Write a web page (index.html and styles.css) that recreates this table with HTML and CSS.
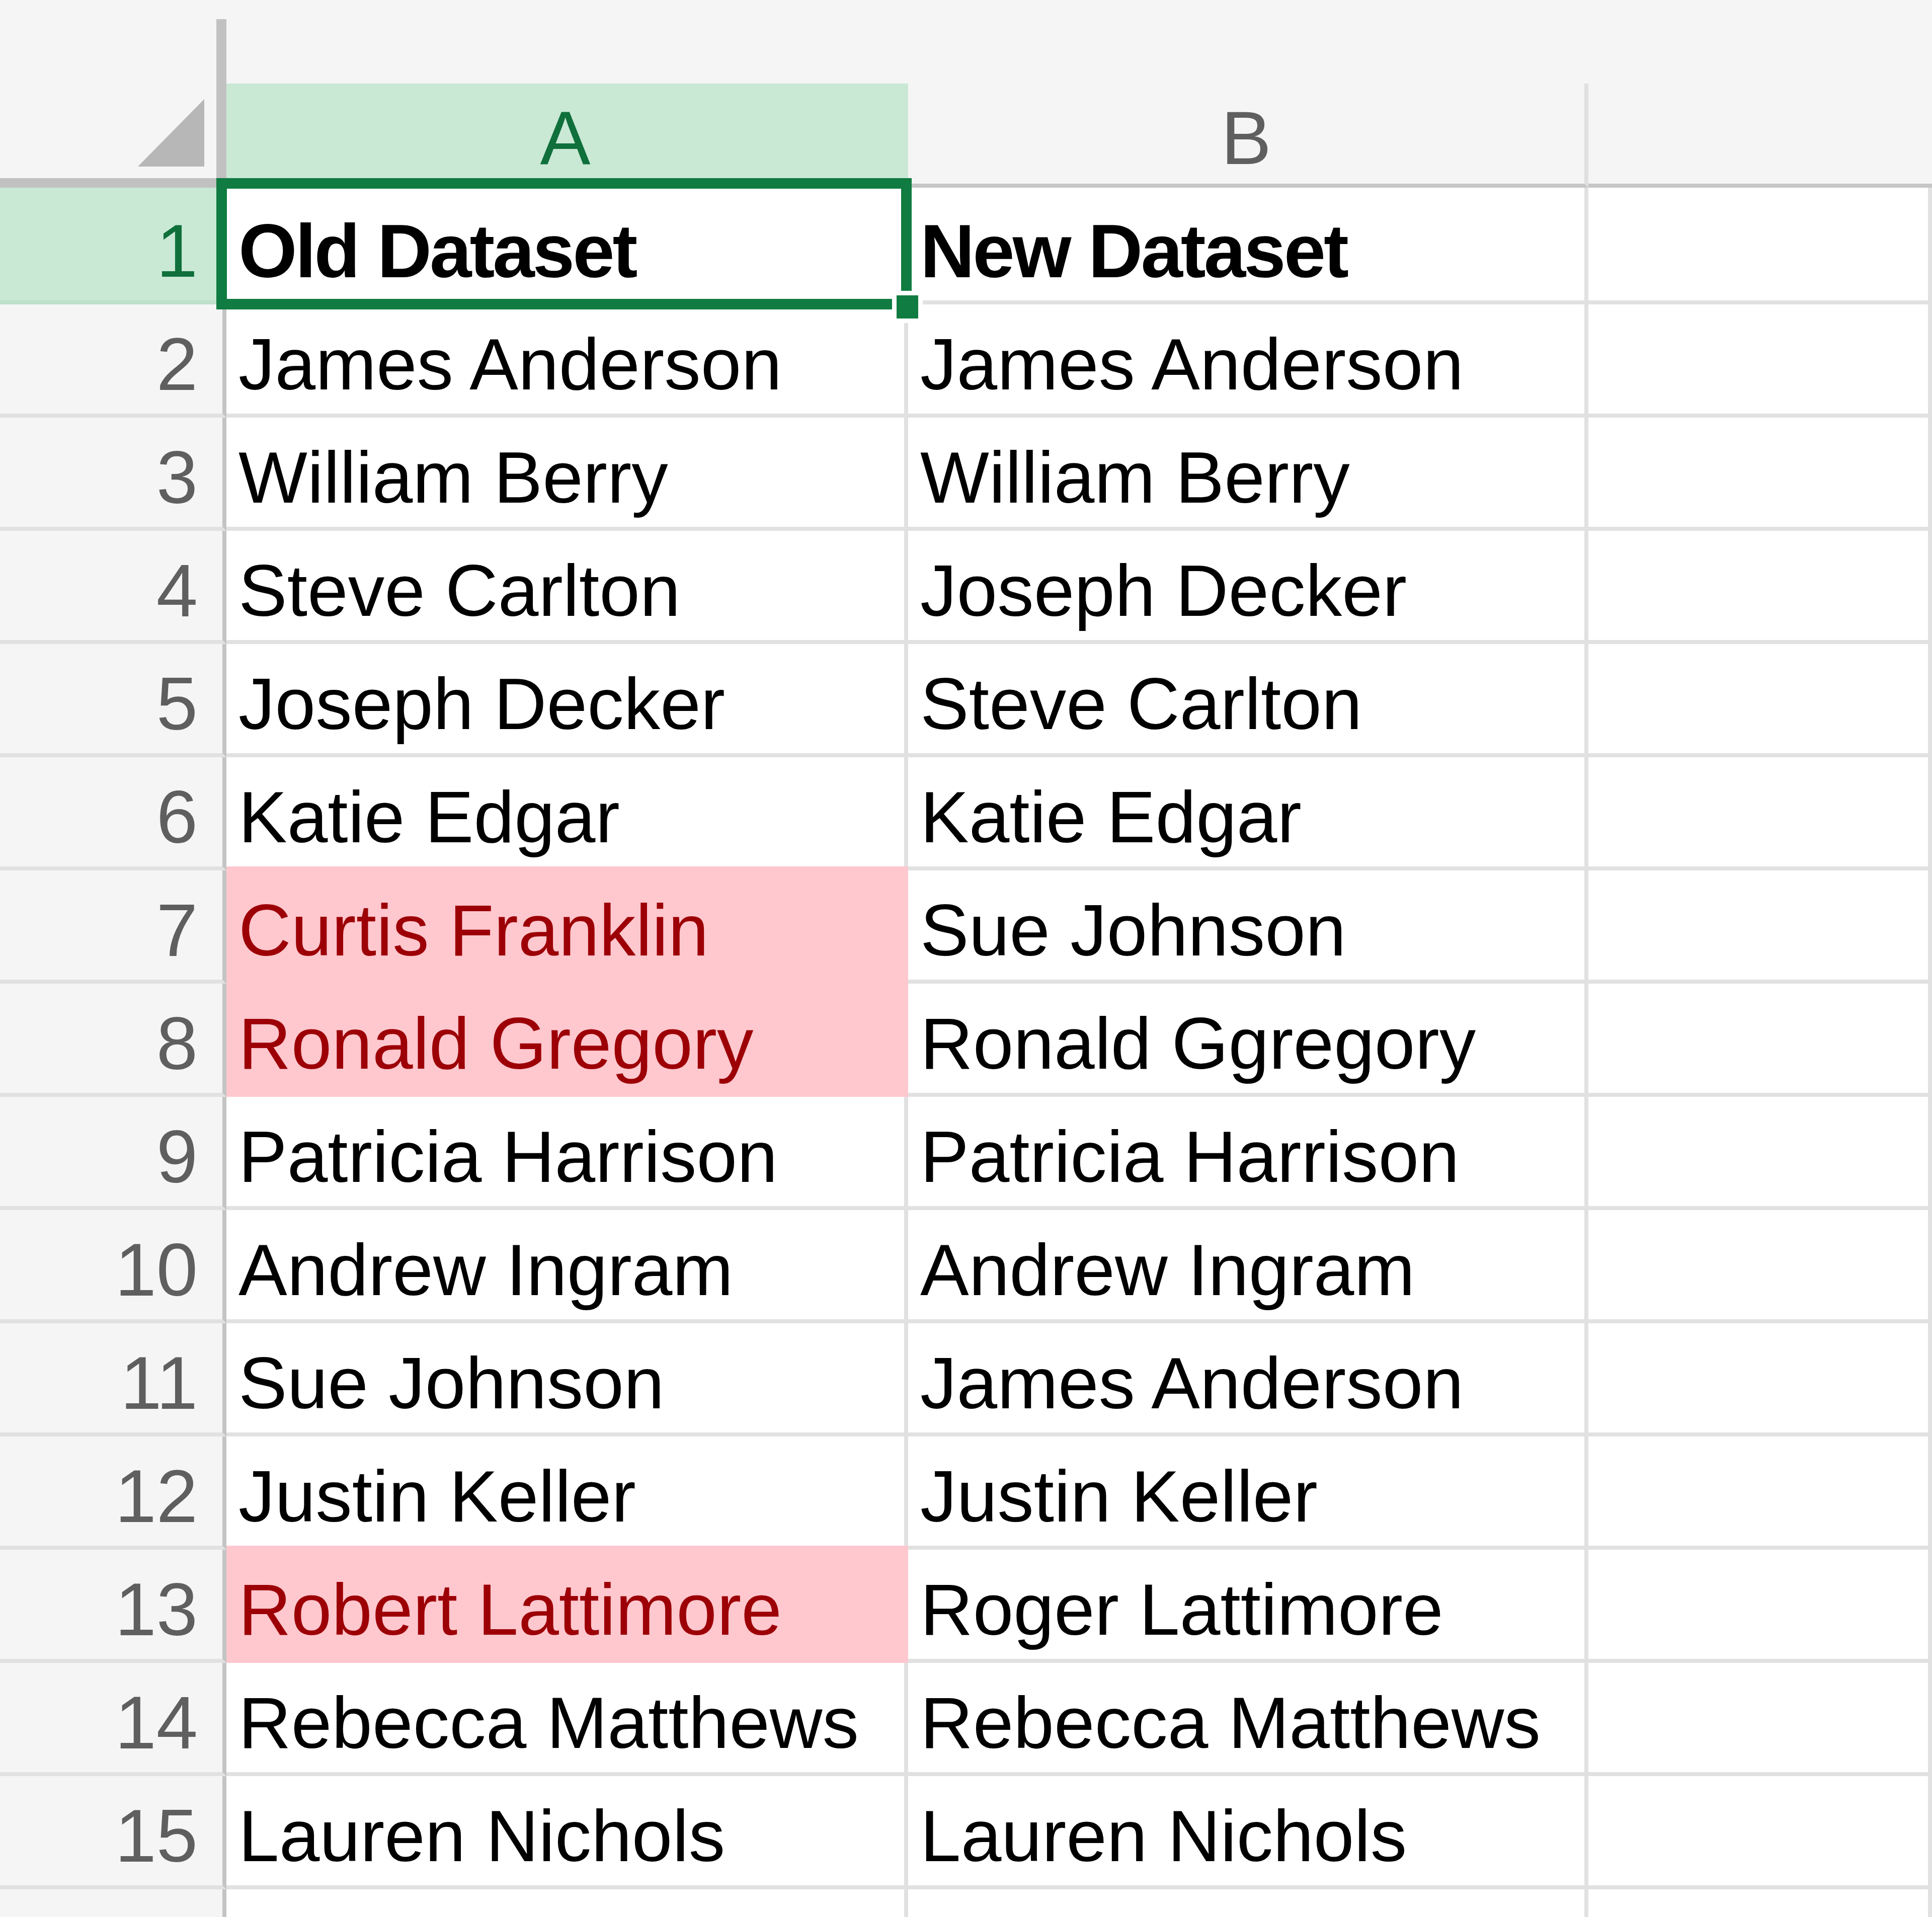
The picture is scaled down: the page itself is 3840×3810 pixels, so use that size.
FILE: index.html
```html
<!DOCTYPE html>
<html lang="en">
<head>
<meta charset="utf-8">
<title>Old vs New Dataset</title>
<link rel="stylesheet" href="styles.css">
</head>
<body>
<div class="sheet">
  <div class="corner"><svg class="tri" width="132" height="134" viewBox="0 0 132 134"><polygon points="132,0 132,134 0,134" fill="#b7b7b7"/></svg></div>
  <div class="colhead active">A</div>
  <div class="colhead">B</div>
  <div class="colhead last"></div>

  <div class="rh active">1</div>
  <div class="cell hd">Old Dataset</div>
  <div class="cell hd">New Dataset</div>
  <div class="cell"></div>

  <div class="rh">2</div>
  <div class="cell">James Anderson</div>
  <div class="cell">James Anderson</div>
  <div class="cell"></div>

  <div class="rh">3</div>
  <div class="cell">William Berry</div>
  <div class="cell">William Berry</div>
  <div class="cell"></div>

  <div class="rh">4</div>
  <div class="cell">Steve Carlton</div>
  <div class="cell">Joseph Decker</div>
  <div class="cell"></div>

  <div class="rh">5</div>
  <div class="cell">Joseph Decker</div>
  <div class="cell">Steve Carlton</div>
  <div class="cell"></div>

  <div class="rh">6</div>
  <div class="cell">Katie Edgar</div>
  <div class="cell">Katie Edgar</div>
  <div class="cell"></div>

  <div class="rh">7</div>
  <div class="cell bad">Curtis Franklin</div>
  <div class="cell">Sue Johnson</div>
  <div class="cell"></div>

  <div class="rh">8</div>
  <div class="cell bad">Ronald Gregory</div>
  <div class="cell">Ronald Ggregory</div>
  <div class="cell"></div>

  <div class="rh">9</div>
  <div class="cell">Patricia Harrison</div>
  <div class="cell">Patricia Harrison</div>
  <div class="cell"></div>

  <div class="rh">10</div>
  <div class="cell">Andrew Ingram</div>
  <div class="cell">Andrew Ingram</div>
  <div class="cell"></div>

  <div class="rh">11</div>
  <div class="cell">Sue Johnson</div>
  <div class="cell">James Anderson</div>
  <div class="cell"></div>

  <div class="rh">12</div>
  <div class="cell">Justin Keller</div>
  <div class="cell">Justin Keller</div>
  <div class="cell"></div>

  <div class="rh">13</div>
  <div class="cell bad">Robert Lattimore</div>
  <div class="cell">Roger Lattimore</div>
  <div class="cell"></div>

  <div class="rh">14</div>
  <div class="cell">Rebecca Matthews</div>
  <div class="cell">Rebecca Matthews</div>
  <div class="cell"></div>

  <div class="rh">15</div>
  <div class="cell">Lauren Nichols</div>
  <div class="cell">Lauren Nichols</div>
  <div class="cell"></div>

  <div class="rh"></div>
  <div class="cell"></div>
  <div class="cell"></div>
  <div class="cell"></div>

  <div class="sel"></div>
  <div class="handle"></div>
</div>
</body>
</html>
```

FILE: styles.css
```css
* { box-sizing: border-box; }

html, body {
  margin: 0;
  padding: 0;
}

body {
  width: 3840px;
  height: 3810px;
  overflow: hidden;
  background: #f5f5f5;
  font-family: "Liberation Sans", Arial, sans-serif;
}

.sheet {
  position: relative;
  display: grid;
  grid-template-columns: 450px 1355px 1352px 1fr;
  grid-template-rows: 373px 232px;
  grid-auto-rows: 225px;
}

.corner {
  margin-top: 38px;
  border-right: 20px solid #c1c1c1;
  border-bottom: 19px solid #c1c1c1;
  display: flex;
  justify-content: flex-end;
  align-items: flex-end;
  padding: 0 24px 23px 0;
}

.tri { display: block; }

.colhead {
  align-self: end;
  height: 207px;
  background: #f5f5f5;
  border-bottom: 8px solid #c6c6c6;
  border-right: 8px solid #e0e0e0;
  display: flex;
  justify-content: center;
  align-items: flex-end;
  padding-bottom: 16px;
  font-size: 150px;
  line-height: 1;
  color: #5f5f5f;
}

.colhead.active {
  background: #c9e9d5;
  color: #0f703b;
  border-right-color: #c9e9d5;
}

.colhead.last { border-right: none; }

.rh {
  background: #f5f5f5;
  border-right: 8px solid #c4c4c4;
  border-bottom: 8px solid #e1e1e1;
  display: flex;
  justify-content: flex-end;
  align-items: flex-end;
  padding: 0 49px 24px 0;
  font-size: 148px;
  line-height: 1;
  color: #5f5f5f;
}

.rh.active {
  background: #c9e9d5;
  color: #0f703b;
  border-bottom-color: #bfe0cb;
}

.cell {
  background: #ffffff;
  border-right: 8px solid #e1e1e1;
  border-bottom: 8px solid #e1e1e1;
  display: flex;
  align-items: flex-end;
  padding: 0 0 25px 24px;
  font-size: 145px;
  line-height: 1;
  white-space: nowrap;
  color: #000000;
}

.cell.hd {
  font-weight: 700;
  font-size: 150px;
  letter-spacing: -4px;
  padding-bottom: 23px;
}

.cell.bad {
  background: #ffc7ce;
  color: #9c0006;
  border-right-color: #ffc7ce;
  border-bottom-color: #ffc7ce;
  box-shadow: 0 -8px 0 #ffc7ce;
}

.sel {
  position: absolute;
  left: 430px;
  top: 354px;
  width: 1382px;
  height: 261px;
  border: 21px solid #107c41;
}

.handle {
  position: absolute;
  left: 1773px;
  top: 578px;
  width: 61px;
  height: 64px;
  background: #107c41;
  border: 9px solid #ffffff;
}
```
